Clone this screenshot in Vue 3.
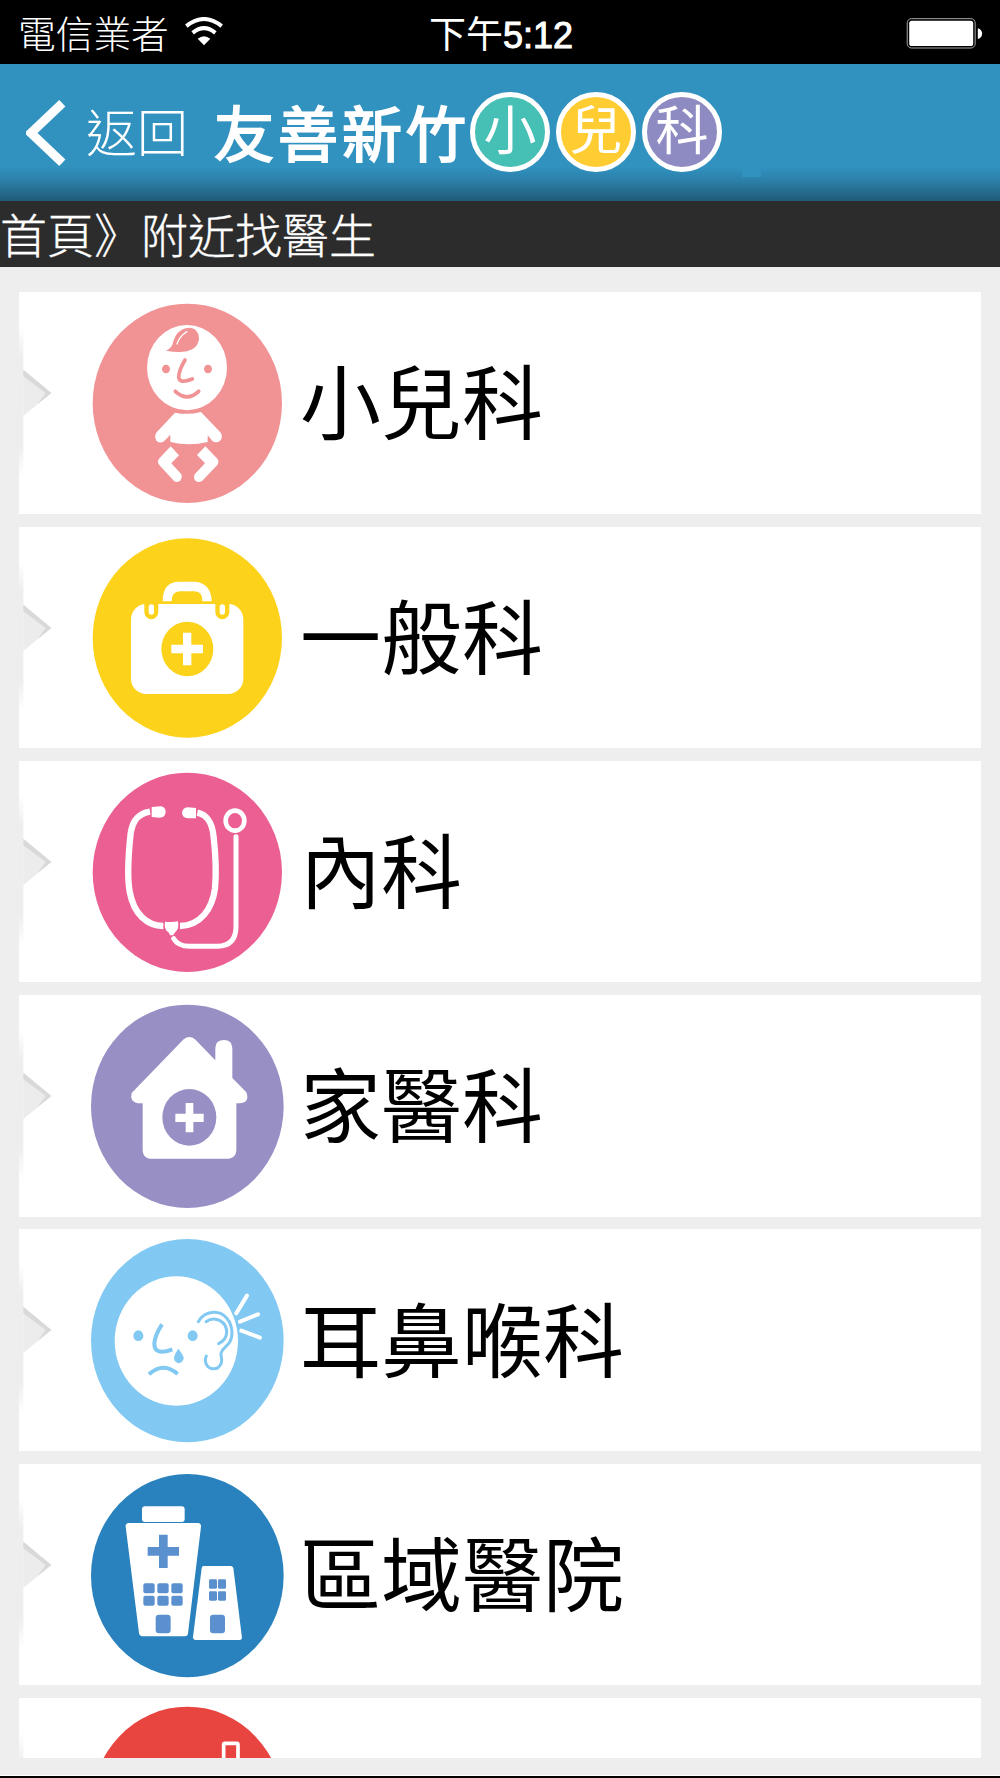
<template>
  <div class="m-page">
    <div class="status">
      <div class="carrier">
        <span>電信業者</span>
        <svg class="wifi" viewBox="0 0 114 86">
          <path d="M4 27 Q57 -16 110 27" fill="none" stroke="#fff" stroke-width="12" />
          <path d="M23 47 Q57 19 91 47" fill="none" stroke="#fff" stroke-width="12" />
          <path d="M38 65 Q57 49 76 65 L57 84Z" fill="#fff" />
        </svg>
      </div>
      <div class="time">下午<b>5:12</b></div>
      <svg class="battery" viewBox="0 0 230 94">
        <rect x="2" y="2" width="206" height="89" rx="13" fill="none" stroke="#aaa" stroke-width="3" />
        <rect x="8" y="8" width="194" height="77" rx="8" fill="#fff" />
        <path d="M216 31 Q229 35 229 47 Q229 60 216 64Z" fill="#fff" />
      </svg>
    </div>

    <header class="header">
      <div class="back pointer">
        <svg class="back-icon" viewBox="0 0 120 196">
          <path d="M109 9 L15 98 L109 187" fill="none" stroke="#fff" stroke-width="27" />
        </svg>
        <span class="back-text">返回</span>
      </div>
      <h1 class="logo">
        <span class="logo-text">友善新竹</span>
        <span v-for="item in logo" :key="item.text" class="logo-dot" :class="item.cls">{{ item.text }}</span>
      </h1>
      <i class="patch"></i>
    </header>

    <nav class="crumb">首頁》附近找醫生</nav>

    <ul class="list">
      <li v-for="item in list" :key="item.icon" class="row pointer">
        <svg class="arrow" viewBox="57 37 99 664">
          <defs>
            <linearGradient id="strip" x1="0" y1="0" x2="0" y2="1">
              <stop offset="0" stop-color="#eee" stop-opacity="0" />
              <stop offset="0.2" stop-color="#eee" />
              <stop offset="0.8" stop-color="#eee" />
              <stop offset="1" stop-color="#eee" stop-opacity="0" />
            </linearGradient>
          </defs>
          <rect x="57" y="140" width="13" height="450" fill="url(#strip)" />
          <template v-if="item.name">
            <path d="M70 270 L154 340 L110 376 L70 409Z" fill="#ececec" />
            <path d="M70 270 L154 340 L112 374 L137 340 L70 290Z" fill="#d9d9d9" />
          </template>
        </svg>

        <svg class="icon" :viewBox="`270 ${item.top} 582 664`">
          <ellipse :cx="562" :cy="item.cy" :rx="item.rx" :ry="item.ry" :fill="item.color" />

          <g v-if="item.icon === 'baby'" fill="#fff">
            <ellipse cx="561" cy="263" rx="120" ry="128" />
            <path d="M525 398 Q563 406 603 396 L661 457 Q669 468 663 479 Q652 492 638 484 L623 466 V486 Q566 499 511 486 V464 L492 484 Q480 492 469 482 Q461 469 470 457Z" />
            <path d="M512 499 L537 526 L514 550 L544 583 Q548 592 542 601 Q532 610 522 603 L477 554 Q471 545 477 536Z" />
            <path d="M616 499 L591 525 L615 550 L584 583 Q579 595 587 603 Q597 609 607 602 L652 555 Q659 544 652 536Z" />
            <g :fill="item.color">
              <path d="M498 212 Q516 206 520 184 Q532 143 572 143 Q597 148 597 177 Q590 228 498 212Z" />
              <ellipse cx="498" cy="267" rx="12" ry="13" />
              <ellipse cx="624" cy="267" rx="12" ry="13" />
            </g>
            <path d="M531 192 Q539 168 561 155" fill="none" stroke="#fff" stroke-width="4" stroke-linecap="round" />
            <path d="M555 240 Q537 270 536 291 Q537 313 577 297 M526 334 Q561 367 596 334" fill="none" :stroke="item.color" stroke-width="11" stroke-linecap="round" />
          </g>

          <g v-else-if="item.icon === 'kit'">
            <path d="M488 243 Q488 184 538 184 H584 Q634 188 635 243 H607 Q608 213 584 213 H540 Q515 213 515 243Z" fill="#fff" />
            <rect x="393" y="251" width="337" height="270" rx="46" fill="#fff" />
            <path d="M433 248 V274 A21 23 0 0 0 475 274 V248Z M646 248 V274 A21 23 0 0 0 688 274 V248Z" :fill="item.color" />
            <rect x="446" y="252" width="16" height="31" rx="8" fill="#fff" />
            <rect x="659" y="252" width="16" height="31" rx="8" fill="#fff" />
            <ellipse cx="562" cy="386" rx="78" ry="82" :fill="item.color" />
            <path d="M549 337 H574 V373 H609 V399 H574 V435 H549 V399 H514 V373 H549Z" fill="#fff" />
          </g>

          <g v-else-if="item.icon === 'scope'" fill="none" stroke="#fff">
            <path d="M450 169 C406 176 393 207 390 253 C384 315 381 365 389 409 C401 475 440 512 490 512" stroke-width="19" />
            <path d="M592 172 C624 179 637 204 641 246 C649 318 648 367 645 399 C637 461 601 511 540 512" stroke-width="19" />
            <path d="M455 155 L482 153 Q497 155 497 170 Q496 187 479 187 L455 185Z M588 158 V189 H563 Q547 187 546 173 Q547 158 563 156Z M495 499 Q516 502 534 498 Q538 522 526 530 L519 540 H510 L505 530 Q491 523 495 499Z" fill="#fff" stroke="none" />
            <ellipse cx="705" cy="196" rx="28" ry="30" stroke-width="14" />
            <path d="M708 244 V516 Q707 572 653 573 H569 Q534 573 521 550" stroke-width="15" stroke-linecap="round" />
          </g>

          <g v-else-if="item.icon === 'house'" fill="#fff">
            <path d="M551 148 Q568 134 585 148 L646 211 V173 Q647 150 672 150 Q696 150 697 174 V264 L739 307 Q750 337 721 340 H709 V482 Q707 503 687 506 H450 Q430 504 428 482 V340 H413 Q388 334 395 309Z" />
            <ellipse cx="568" cy="382" rx="81" ry="85" :fill="item.color" />
            <path d="M557 339 H580 V371 H611 V396 H580 V427 H557 V396 H526 V371 H557Z" />
          </g>

          <g v-else-if="item.icon === 'ear'">
            <ellipse cx="529" cy="348" rx="185" ry="194" fill="#fff" />
            <ellipse cx="415" cy="332" rx="15" ry="16" :fill="item.color" />
            <ellipse cx="578" cy="332" rx="15" ry="16" :fill="item.color" />
            <path d="M535 371 Q551 391 551 400 Q548 414 536 415 Q523 412 522 399 Q523 388 535 371Z" :fill="item.color" />
            <g fill="none" :stroke="item.color">
              <path d="M486 298 Q466 328 463 354 Q462 394 517 373 M447 448 Q490 409 533 447" stroke-width="12" />
              <path d="M595 290 Q611 263 641 262 C673 261 696 290 696 324 C696 365 668 361 663 385 C662 395 668 402 664 414 C655 438 624 437 617 413 Q614 402 619 393 M618 290 C645 271 682 290 680 324 Q678 346 656 356" stroke-width="9" stroke-linecap="round" />
            </g>
            <path d="M741 212 L709 265 M774 268 L720 290 M724 317 L780 338" fill="none" stroke="#fff" stroke-width="12" stroke-linecap="round" />
          </g>

          <g v-else-if="item.icon === 'hospital'" fill="#fff">
            <rect x="426" y="138" width="128" height="47" rx="9" />
            <path d="M386 188 H594 Q604 189 603 199 L564 519 Q563 528 555 528 H425 Q418 527 417 519 L377 199 Q376 189 386 188Z" />
            <path d="M611 317 H693 Q699 318 700 323 L726 532 Q726 538 720 539 H585 Q579 538 579 531 L605 323 Q606 317 611 317Z" />
            <g fill="#5a90cd">
              <path d="M477 223 H503 V260 H537 V286 H503 V323 H477 V286 H443 V260 H477Z" />
              <rect v-for="n in 6" :key="n" :x="430 + (n - 1) % 3 * 42" :y="n > 3 ? 406 : 369" width="34" height="30" rx="6" />
              <rect v-for="n in 4" :key="n" :x="n % 2 ? 627 : 654" :y="n > 2 ? 393 : 357" width="24" height="28" rx="4" />
              <rect x="467" y="463" width="45" height="56" rx="10" />
              <rect x="630" y="463" width="45" height="56" rx="10" />
            </g>
          </g>

          <rect v-else x="671" y="849" width="43" height="110" rx="4" fill="none" stroke="#fff" stroke-width="11" />
        </svg>
        <span class="name">{{ item.name }}</span>
      </li>
    </ul>
    <div class="bottom-line"></div>
  </div>
</template>

<script setup>
const logo = [
  { text: '小', cls: 'green' },
  { text: '兒', cls: 'yellow' },
  { text: '科', cls: 'purple' }
]

// top, cy: 圖示在畫布上的縱向位置
const list = [
  { icon: 'baby', name: '小兒科', color: '#f19294', top: 36, cy: 370, rx: 284, ry: 299 },
  { icon: 'kit', name: '一般科', color: '#fcd21b', top: 20, cy: 353, rx: 284, ry: 299 },
  { icon: 'scope', name: '內科', color: '#eb5f93', top: 17, cy: 351, rx: 284, ry: 299 },
  { icon: 'house', name: '家醫科', color: '#9890c5', top: 15, cy: 349, rx: 289, ry: 305 },
  { icon: 'ear', name: '耳鼻喉科', color: '#81c9f2', top: 12, cy: 347, rx: 289, ry: 305 },
  { icon: 'hospital', name: '區域醫院', color: '#2982bd', top: 11, cy: 346, rx: 289, ry: 305 },
  { icon: 'other', name: '', color: '#e84541', top: 713, cy: 1044, rx: 289, ry: 305 }
]
</script>

<style>
body {
  margin: 0;
  background: #eee;
}
</style>

<style scoped>
.m-page {
  display: flex;
  flex-direction: column;
  width: 1000px;
  height: 1778px;
  overflow: hidden;
  background: #eee;
  font-family: "Liberation Sans", "Noto Sans CJK TC", sans-serif;
  font-weight: 300;
}

.pointer {
  cursor: pointer;
}

.status {
  display: grid;
  grid-template-columns: 429px 1fr auto;
  align-items: center;
  flex: none;
  height: 64px;
  padding: 0 17px 0 0;
  background: #000;
  color: #fff;
}

.carrier {
  display: flex;
  align-items: center;
  gap: 16px;
  padding: 0 0 2px 18px;
  font-size: 37.7px;
}

.wifi {
  width: 38px;
  height: 29px;
}

.time {
  font-size: 37px;
  font-weight: 400;
  white-space: nowrap;
}

.time b {
  font-size: 36px;
  font-weight: 400;
  -webkit-text-stroke: 1px #fff;
}

.battery {
  width: 77px;
  height: 31px;
  margin-top: 3px;
}

.header {
  position: relative;
  display: flex;
  align-items: center;
  flex: none;
  height: 137px;
  background: linear-gradient(#3192c0 0, #3192c0 75%, #2b7ea6 86%, #205b78 100%);
  color: #fff;
}

.back {
  display: flex;
  align-items: center;
  gap: 20px;
  width: 188px;
  padding-left: 26px;
  font-size: 51px;
  white-space: nowrap;
}

.back-text {
  padding-bottom: 5px;
}

.back-icon {
  flex: none;
  width: 40px;
  height: 66px;
}

.logo {
  display: flex;
  align-items: center;
  gap: 6px;
  margin: 0;
  padding-bottom: 2px;
  font-weight: 400;
}

.logo-text {
  width: 250px;
  padding-bottom: 3px;
  font-size: 60px;
  letter-spacing: 4px;
  white-space: nowrap;
  -webkit-text-stroke: 2px #fff;
}

.logo-dot {
  box-sizing: border-box;
  width: 80px;
  height: 80px;
  border: 5px solid #fff;
  border-radius: 50%;
  font-size: 53px;
  line-height: 70px;
  text-align: center;
}

.green {
  background: #46bfb4;
}

.yellow {
  background: #ffcc32;
}

.purple {
  background: #8e8bc3;
}

.patch {
  position: absolute;
  left: 742px;
  top: 104px;
  width: 19px;
  height: 9px;
  background: #3192c0;
}

.crumb {
  box-sizing: border-box;
  flex: none;
  height: 66px;
  padding-top: 2px;
  background: #2c2c2c;
  color: #fff;
  font-size: 47px;
  line-height: 68px;
  -webkit-text-stroke: 0.3px #fff;
}

.list {
  flex: none;
  height: 1465.4px;
  margin: 25.3px 19px 0;
  padding: 0;
  overflow: hidden;
  list-style: none;
}

.row {
  display: flex;
  align-items: center;
  height: 221.4px;
  margin-bottom: 12.9px;
  background: #fff;
}

.arrow {
  width: 33px;
  height: 221.3px;
}

.icon {
  width: 194px;
  height: 221.3px;
  margin-left: 38px;
}

.name {
  margin-left: 16px;
  padding-top: 6px;
  color: #000;
  font-size: 81px;
  font-weight: 400;
  line-height: 1;
}

.bottom-line {
  height: 3px;
  margin-top: auto;
  border-top: 1px solid #fff;
  box-sizing: border-box;
  background: #000;
}
</style>
